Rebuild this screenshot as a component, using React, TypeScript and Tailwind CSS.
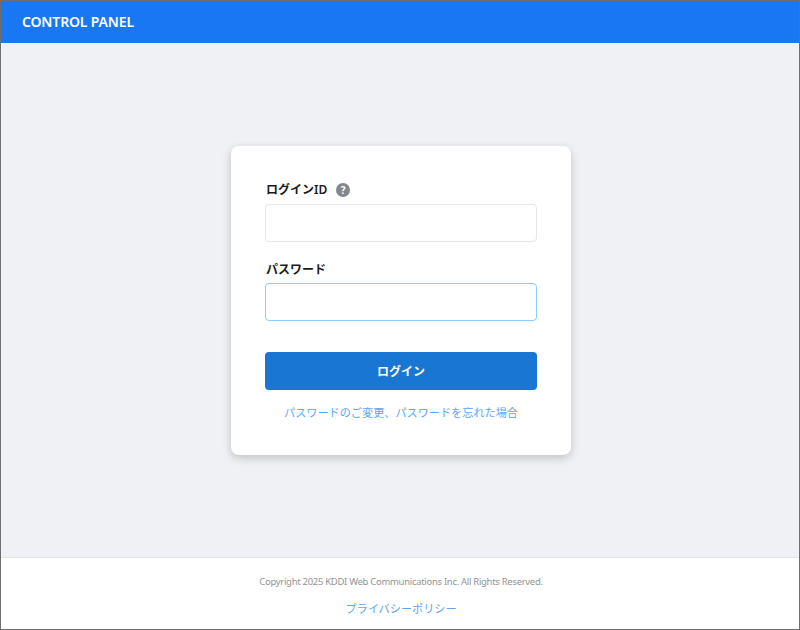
const jp = 'font-["Noto_Sans","Noto_Sans_CJK_JP",sans-serif]'

const HelpIcon = () => (
    <span className="ml-[9px] flex h-[14px] w-[14px] items-center justify-center rounded-full bg-[#85878c] text-[10px] font-bold leading-none text-white">
        ?
    </span>
)

export default function App() {
    return (
        <div className={`flex h-[630px] w-[800px] flex-col border border-[#6e6e6e] bg-[#f0f1f5] ${jp}`}>
            <header className="flex h-[42px] shrink-0 items-center bg-[#1977f3] pb-[2px] pl-[21px]">
                <span className="text-[14px] font-semibold tracking-[-0.15px] text-white">CONTROL PANEL</span>
            </header>

            <main className="flex flex-1 items-start justify-center pl-[2px] pt-[103px]">
                <div className="h-[309px] w-[340px] rounded-lg bg-white px-[34px] pt-[34px] shadow-[0_3px_10px_rgba(0,0,0,0.2)]">
                    <div className="flex h-[20px] items-center pl-[1px]">
                        <label className="text-[12px] font-semibold leading-none text-[#1a1a1a]">ログインID</label>
                        <HelpIcon />
                    </div>
                    <input
                        type="text"
                        className="mt-[4px] block h-[38px] w-[272px] rounded border border-[#e6e7ea] bg-white outline-none"
                    />
                    <label className="mt-[18px] block h-[20px] pl-[1px] text-[12px] font-semibold leading-[20px] text-[#1a1a1a]">
                        パスワード
                    </label>
                    <input
                        type="password"
                        className="mt-[3px] block h-[38px] w-[272px] rounded border border-[#90caf9] bg-white outline-none"
                    />
                    <button className="mt-[31px] block h-[38px] w-[272px] rounded bg-[#1976d2] pt-[2px] text-[12px] font-semibold text-white">
                        ログイン
                    </button>
                    <a className="mt-[14px] block text-center text-[11.15px] leading-[18px] text-[#5ea6f2]">
                        パスワードのご変更、パスワードを忘れた場合
                    </a>
                </div>
            </main>

            <footer className="flex h-[72px] shrink-0 flex-col items-center border-t border-[#e3e4e8] bg-white pl-[2px] pt-[15px]">
                <p className="text-[9.5px] leading-[18px] tracking-[-0.3px] text-[#949494]">
                    Copyright 2025 KDDI Web Communications Inc. All Rights Reserved.
                </p>
                <a className="mt-[9px] text-[11.15px] leading-[18px] text-[#5ea6f2]">プライバシーポリシー</a>
            </footer>
        </div>
    )
}
